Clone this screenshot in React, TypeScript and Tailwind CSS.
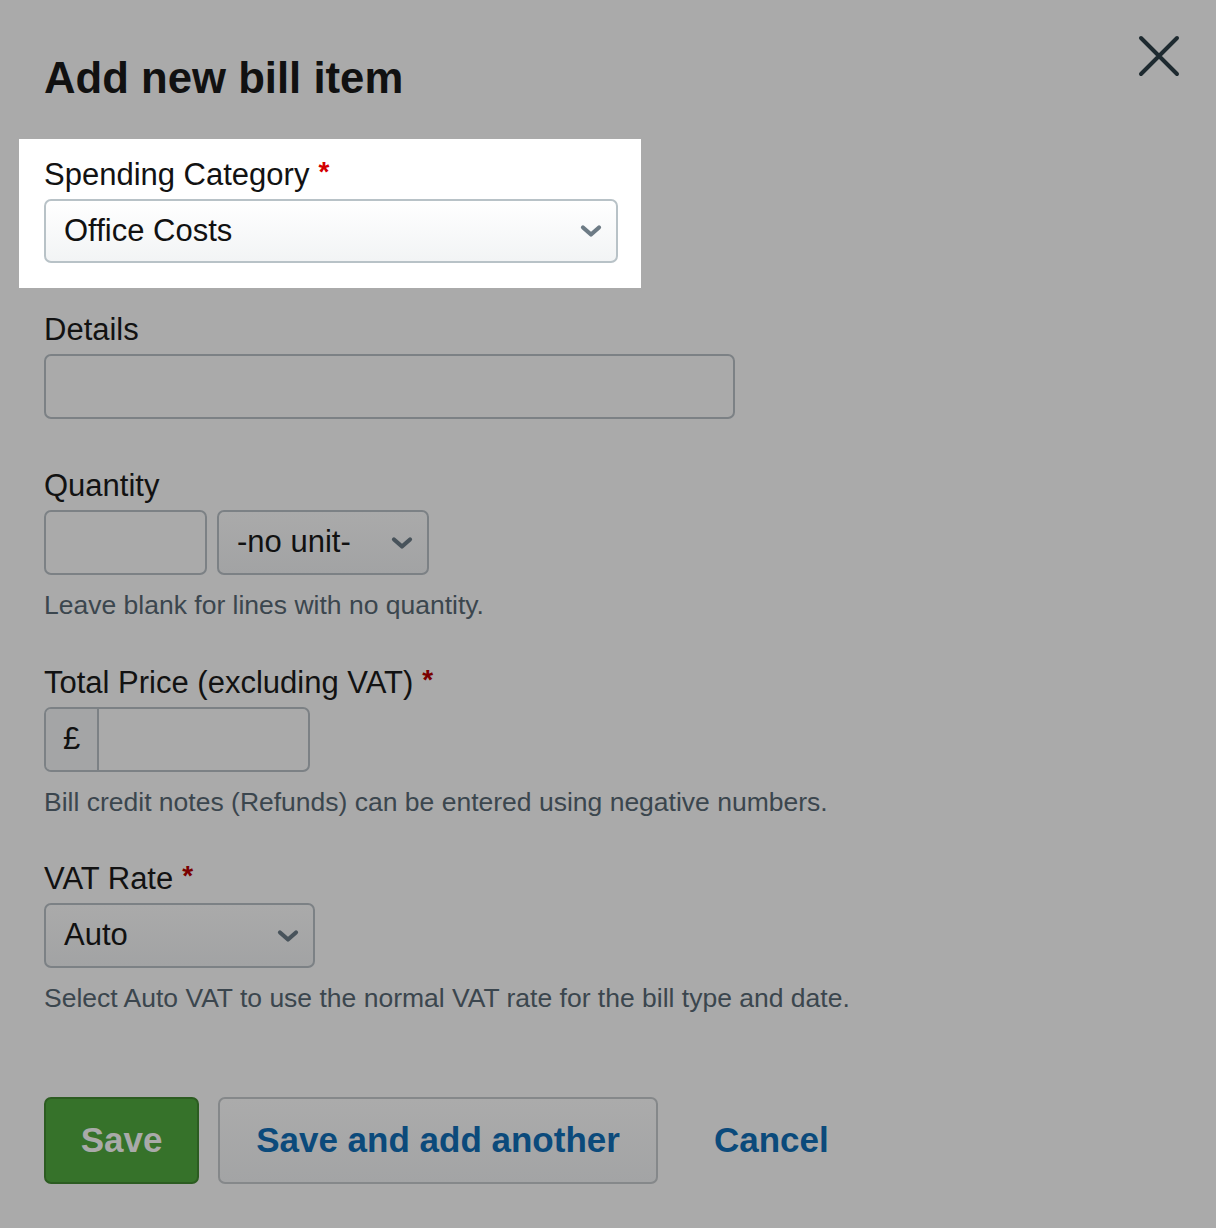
import React from 'react';

function Chevron({ className }: { className?: string }) {
  return (
    <svg width="22" height="16" viewBox="0 0 22 16" className={className} fill="none">
      <path d="M3 4.5l8 7 8-7" stroke="currentColor" strokeWidth="4.2" strokeLinecap="round" strokeLinejoin="round" />
    </svg>
  );
}

function Label({ text, required, star = 'text-[#7a0000]' }: { text: string; required?: boolean; star?: string }) {
  return (
    <div className="h-[36px] leading-[36px] text-[31px] text-[#121212] mb-[6px] whitespace-nowrap">
      {text}
      {required && <span className={`ml-[9px] font-bold text-[28px] align-top relative top-[-3px] ${star}`}>*</span>}
    </div>
  );
}

function Help({ text }: { text: string }) {
  return <p className="mt-[15px] h-[30px] leading-[30px] text-[26.5px] text-[#3b464e] whitespace-nowrap">{text}</p>;
}

export default function App() {
  return (
    <div className="relative w-[1216px] h-[1228px] bg-[#aaaaaa] font-['Liberation_Sans',Arial,sans-serif] overflow-hidden">
      {/* Close */}
      <button className="absolute left-[1136px] top-[33px] w-[46px] h-[46px] text-[#1e2a30]" aria-label="Close">
        <svg width="46" height="46" viewBox="0 0 46 46" fill="none">
          <path d="M5 5l36 36M41 5L5 41" stroke="currentColor" strokeWidth="4" strokeLinecap="round" />
        </svg>
      </button>

      <div className="pl-[44px] pt-[56px]">
        <h1 className="text-[43.7px] leading-[43px] font-bold text-[#111]">Add new bill item</h1>

        {/* Spending Category (highlighted) */}
        <div className="mt-[40px] -ml-[25px] w-[622px] bg-white pl-[25px] pt-[18px] pb-[25px]">
          <Label text="Spending Category" required star="text-[#d40000]" />
          <div className="h-[64px] w-[574px] flex items-center justify-between rounded-[7px] border-2 border-[#b8c2c7] bg-gradient-to-b from-white to-[#f2f4f5] pl-[18px] pr-[14px]">
            <span className="text-[31px] text-[#111]">Office Costs</span>
            <Chevron className="text-[#6d7b85]" />
          </div>
        </div>

        {/* Details */}
        <div className="mt-[24px]">
          <Label text="Details" />
          <div className="h-[65px] w-[691px] rounded-[7px] border-2 border-[#7c8185] bg-[#aaaaaa]" />
        </div>

        {/* Quantity */}
        <div className="mt-[49px]">
          <Label text="Quantity" />
          <div className="flex gap-[10px]">
            <div className="h-[65px] w-[163px] rounded-[7px] border-2 border-[#7c8185] bg-[#aaaaaa]" />
            <div className="h-[65px] w-[212px] flex items-center justify-between rounded-[7px] border-2 border-[#7c8185] bg-gradient-to-b from-[#aaaaaa] to-[#a2a3a4] pl-[18px] pr-[14px]">
              <span className="text-[31px] text-[#111]">-no unit-</span>
              <Chevron className="text-[#48535b]" />
            </div>
          </div>
          <Help text="Leave blank for lines with no quantity." />
        </div>

        {/* Total Price */}
        <div className="mt-[45px]">
          <Label text="Total Price (excluding VAT)" required />
          <div className="h-[65px] w-[266px] flex rounded-[7px] border-2 border-[#7c8185] bg-[#aaaaaa] overflow-hidden">
            <div className="w-[53px] flex items-center justify-center border-r-2 border-[#7c8185] bg-[#a4a5a6] text-[31px] text-[#111]">£</div>
            <div className="flex-1" />
          </div>
          <Help text="Bill credit notes (Refunds) can be entered using negative numbers." />
        </div>

        {/* VAT Rate */}
        <div className="mt-[44px]">
          <Label text="VAT Rate" required />
          <div className="h-[65px] w-[271px] flex items-center justify-between rounded-[7px] border-2 border-[#7c8185] bg-gradient-to-b from-[#aaaaaa] to-[#a2a3a4] pl-[18px] pr-[14px]">
            <span className="text-[31px] text-[#111]">Auto</span>
            <Chevron className="text-[#48535b]" />
          </div>
          <Help text="Select Auto VAT to use the normal VAT rate for the bill type and date." />
        </div>

        {/* Actions */}
        <div className="mt-[84px] flex items-center">
          <button className="h-[87px] w-[155px] rounded-[7px] border-2 border-[#2c5c21] bg-[#36722a] text-[35px] font-bold text-[#a9aaa9]">
            Save
          </button>
          <button className="ml-[19px] h-[87px] w-[440px] rounded-[7px] border-2 border-[#85888a] bg-gradient-to-b from-[#ababab] to-[#a3a4a5] text-[35px] font-bold text-[#0b4a7b]">
            Save and add another
          </button>
          <button className="ml-[56px] text-[35px] font-bold text-[#0b4a7b]">Cancel</button>
        </div>
      </div>
    </div>
  );
}
